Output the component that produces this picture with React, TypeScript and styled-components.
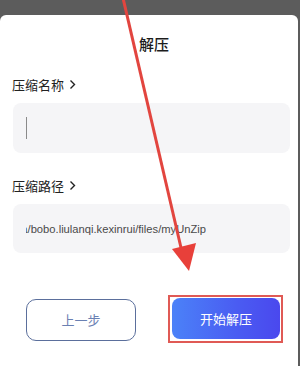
import styled, { createGlobalStyle } from 'styled-components';

const GlobalStyle = createGlobalStyle`
  html, body {
    margin: 0;
    padding: 0;
    background: #ffffff;
  }
  body {
    font-family: 'Noto Sans CJK SC', 'Noto Sans', sans-serif;
  }
`;

const Page = styled.div`
  position: relative;
  width: 300px;
  height: 366px;
  overflow: hidden;
  background: #5c5c5c;
  display: flex;
  flex-direction: column;
`;

const Sheet = styled.div`
  margin-top: 15px;
  flex: 1;
  background: #ffffff;
  border-radius: 6px 6px 0 0;
  margin-right: 2px;
  padding: 19px 8px 0 12px;
  display: flex;
  flex-direction: column;
`;

const Title = styled.div`
  height: 20px;
  line-height: 20px;
  text-align: center;
  font-size: 15px;
  font-weight: 500;
  color: #1c1c1c;
  padding-left: 6px;
`;

const Label = styled.div<{ $top: number }>`
  margin-top: ${({ $top }) => $top}px;
  height: 18px;
  display: flex;
  align-items: center;
  gap: 5px;
  font-size: 13px;
  color: #222;
`;

const Field = styled.div<{ $height: number }>`
  margin: 10px 0 0 1px;
  height: ${({ $height }) => $height}px;
  background: #f5f5f7;
  border-radius: 8px;
  display: flex;
  align-items: center;
  padding-left: 13px;
`;

const Caret = styled.div`
  width: 1px;
  height: 22px;
  background: #8a8a8a;
`;

const PathClip = styled.div`
  width: 180px;
  overflow: hidden;
  display: flex;
  justify-content: flex-end;
  white-space: nowrap;
  font-family: 'Liberation Sans', 'Noto Sans', sans-serif;
  font-size: 11.2px;
  color: #4a4a4a;
`;

const ButtonRow = styled.div`
  margin-top: 42px;
  display: flex;
  align-items: center;
  padding-left: 14px;
  gap: 32px;
`;

const OutlineButton = styled.button`
  width: 110px;
  height: 42px;
  margin-top: 1px;
  border: 1.5px solid #5b6f9c;
  border-radius: 10px;
  background: #fff;
  color: #6a80b2;
  font-family: inherit;
  font-size: 13px;
`;

const Highlight = styled.div`
  border: 2px solid #e05a55;
  padding: 1px 1px 2px 2px;
`;

const PrimaryButton = styled.button`
  width: 108px;
  height: 41px;
  border: none;
  border-radius: 8px;
  background: linear-gradient(90deg, #4b82f8 0%, #4a5cf2 60%, #4a48ee 100%);
  color: #ffffff;
  font-family: inherit;
  font-size: 13px;
`;

const ArrowLayer = styled.svg`
  position: absolute;
  left: 0;
  top: 0;
  pointer-events: none;
`;

function Chevron() {
  return (
    <svg width="7" height="11" viewBox="0 0 7 11">
      <path d="M1.5 1.5 L5.5 5.5 L1.5 9.5" fill="none" stroke="#222" strokeWidth="1.4" />
    </svg>
  );
}

export default function App() {
  return (
    <>
      <GlobalStyle />
      <Page>
        <Sheet>
          <Title>解压</Title>
          <Label $top={21}>
            压缩名称 <Chevron />
          </Label>
          <Field $height={50}>
            <Caret />
          </Field>
          <Label $top={23}>
            压缩路径 <Chevron />
          </Label>
          <Field $height={49}>
            <PathClip>
              <span>data/bobo.liulanqi.kexinrui/files/myUnZip</span>
            </PathClip>
          </Field>
          <ButtonRow>
            <OutlineButton>上一步</OutlineButton>
            <Highlight>
              <PrimaryButton>开始解压</PrimaryButton>
            </Highlight>
          </ButtonRow>
        </Sheet>
        <ArrowLayer width="300" height="366" viewBox="0 0 300 366">
          <line x1="123" y1="-2" x2="182" y2="252" stroke="#e2453f" strokeWidth="3" />
          <polygon points="172,249 196,243 189,271" fill="#e8403a" />
        </ArrowLayer>
      </Page>
    </>
  );
}
